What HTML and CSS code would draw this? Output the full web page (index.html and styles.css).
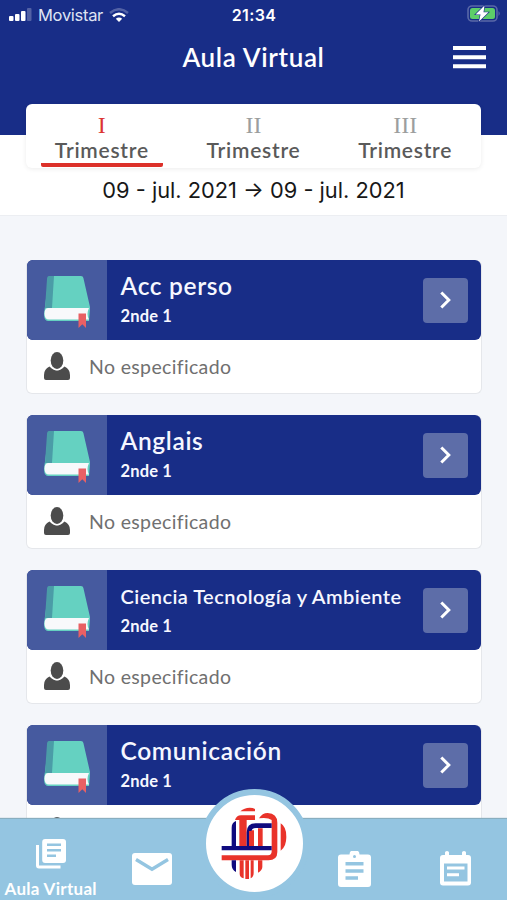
FILE: index.html
```html
<!DOCTYPE html>
<html lang="es">
<head>
<meta charset="utf-8">
<title>Aula Virtual</title>
<link rel="stylesheet" href="styles.css">
</head>
<body>
<svg class="defs" aria-hidden="true">
  <symbol id="book" viewBox="0 0 46 52">
    <path fill="#65d1c1" d="M5 0h32q2 0 2.400 2L46 31v2l-1 12H4Q0 45 0 38Z"/>
    <path fill="#4b9ca7" d="M5 0h5L8 32H1L3 3Q3.200 0 5 0Z"/>
    <path fill="#f8f9fb" d="M5 32h40q-3 6 0 11.500H5q-4.500 0-4.500-6T5 32Z"/>
    <path fill="#e86064" d="M34.500 37.500H42V52l-3.700-3.700-3.800 3.700Z"/>
  </symbol>
  <symbol id="person" viewBox="0 0 26 28">
    <path d="M5.500 14.500q7.500 8 15 0Q26 17 26 23v3q0 2-2 2H2q-2 0-2-2v-3q0-6 5.500-8.500Z"/>
    <ellipse cx="13" cy="8.700" rx="7.200" ry="9.500" fill="#fff"/>
    <ellipse cx="13" cy="8.500" rx="6.300" ry="8.500"/>
  </symbol>
  <symbol id="chevron" viewBox="0 0 14 20">
    <path d="m2.300 2.500 7.500 7.500-7.500 7.500" fill="none" stroke="#fff" stroke-width="3"/>
  </symbol>
</svg>
<div class="app">
  <header class="top">
    <div class="status">
      <div class="carrier">
        <svg width="23" height="14" viewBox="0 0 23 14" fill="#fff"><rect x="0" y="8" width="4.500" height="5" rx="1"/><rect x="6" y="6" width="4.500" height="7" rx="1"/><rect x="12" y="3" width="4.500" height="10" rx="1"/><rect x="18" y="0" width="4.500" height="13" rx="1" opacity=".25"/></svg>
        <span class="operator">Movistar</span>
        <svg width="20" height="15" viewBox="0 0 20 15" fill="none" stroke="#fff" stroke-width="2.500"><path d="M1 5q9-7.500 18 0" opacity=".25"/><path d="M4 8.200q6-5 12 0"/><path d="M6.800 10.800q3.200-2.400 6.400 0L10 14Z" fill="#fff" stroke="none"/></svg>
      </div>
      <time class="clock">21:34</time>
      <svg class="battery" width="34" height="17" viewBox="0 0 34 17"><rect x="1" y="1" width="29" height="15" rx="4" fill="none" stroke="#5968a8" stroke-width="1.600"/><path d="M31.500 6q2.500 2.500 0 5Z" fill="#5968a8"/><rect x="3" y="3" width="25" height="11" rx="2.500" fill="#5dce69"/><path d="m17.500.5-9 9h5L12 16.500l9.500-9.200h-5Z" fill="#fff" stroke="#182d87" stroke-width="1.200" paint-order="stroke"/></svg>
    </div>
    <div class="titlebar">
      <h1>Aula Virtual</h1>
      <svg class="menu" width="33" height="23" viewBox="0 0 33 23" fill="#fff"><path d="M0 0h33v4H0ZM0 9.200h33v4H0ZM0 18.200h33v4H0Z"/></svg>
    </div>
  </header>
  <section class="period">
    <nav class="tabs">
      <div class="tab active"><span class="numeral">I</span><span class="label">Trimestre</span></div>
      <div class="tab"><span class="numeral">II</span><span class="label">Trimestre</span></div>
      <div class="tab"><span class="numeral">III</span><span class="label">Trimestre</span></div>
    </nav>
    <p class="dates">09 - jul. 2021 → 09 - jul. 2021</p>
  </section>
  <main class="courses">
    <article class="card">
      <div class="course"><div class="thumb"><svg><use href="#book"/></svg></div><div class="info"><h2>Acc perso</h2><p>2nde 1</p></div><div class="go"><svg><use href="#chevron"/></svg></div></div>
      <div class="teacher"><svg><use href="#person"/></svg><span>No especificado</span></div>
    </article>
    <article class="card">
      <div class="course"><div class="thumb"><svg><use href="#book"/></svg></div><div class="info"><h2>Anglais</h2><p>2nde 1</p></div><div class="go"><svg><use href="#chevron"/></svg></div></div>
      <div class="teacher"><svg><use href="#person"/></svg><span>No especificado</span></div>
    </article>
    <article class="card">
      <div class="course"><div class="thumb"><svg><use href="#book"/></svg></div><div class="info"><h2 class="long">Ciencia Tecnología y Ambiente</h2><p>2nde 1</p></div><div class="go"><svg><use href="#chevron"/></svg></div></div>
      <div class="teacher"><svg><use href="#person"/></svg><span>No especificado</span></div>
    </article>
    <article class="card">
      <div class="course"><div class="thumb"><svg><use href="#book"/></svg></div><div class="info"><h2>Comunicación</h2><p>2nde 1</p></div><div class="go"><svg><use href="#chevron"/></svg></div></div>
      <div class="teacher"><svg><use href="#person"/></svg></div>
    </article>
  </main>
  <footer class="bottom">
    <div class="item current">
      <svg width="30" height="30" viewBox="0 0 30 30"><path d="M0 6h3v20.500h21.500v3H3q-3 0-3-3Z" fill="#fff"/><rect x="6.200" y="0" width="23.800" height="24" rx="3" fill="#fff"/><path d="M11 5.800h14M11 11.200h14M11 16.800h9" stroke="#94c5e1" stroke-width="2.600"/></svg>
      <span>Aula Virtual</span>
    </div>
    <div class="item"><svg width="40" height="32" viewBox="0 0 40 32"><rect width="40" height="32" rx="3" fill="#fff"/><path d="m4 6.500 16 9.700 16-9.700" fill="none" stroke="#94c5e1" stroke-width="3.400"/></svg></div>
    <div class="item"></div>
    <div class="item"><svg width="33" height="36" viewBox="0 0 33 36"><path d="M3 3.500h8.500a5 5 0 0 1 10 0H30q3 0 3 3V33q0 3-3 3H3q-3 0-3-3V6.500q0-3 3-3Z" fill="#fff"/><circle cx="16.500" cy="5.500" r="1.500" fill="#94c5e1"/><path d="M7.500 12.700h18M7.500 20h18M7.500 27h12.500" stroke="#94c5e1" stroke-width="3.400"/></svg></div>
    <div class="item"><svg width="32" height="35" viewBox="0 0 32 35"><path d="M3 4h2V1.500Q5 0 7 0t2 1.500V4h13V1.500Q22 0 24 0t2 1.500V4h2q3 0 3 3v24.500q0 3-3 3H3q-3 0-3-3V7q0-3 3-3Z" fill="#fff"/><path fill="#94c5e1" d="M4 12.500h23.500v18H4Z"/><path d="M7 17h17.500M7 23.800h12" stroke="#fff" stroke-width="3"/></svg></div>
    <div class="brand">
      <svg width="66" height="73" viewBox="18 20 198 219">
        <g fill="#e9332a">
          <path d="M76 33q12-11 28-11 10 0 16 4v7Z"/>
          <path d="M60 59q4-14 18-14h42v14Z"/>
          <path d="M73 59h22v78H73ZM102 90h15v47h-15ZM129 84h14v53h-14Z"/>
          <path d="M74 180h12v54q-12-3-12-14ZM91 180h11v56H91ZM107 180h9v38q0 12-9 16ZM129 180h13v20q0 10-13 17Z"/>
          <path d="M132 54q10-16 26-16 29 2 29 29v88q0 25-27 25H20v-15h139q11 0 11-12V59q-12-9-38-5Z"/>
          <path d="M197 69q17 10 17 40t-17 42Z"/>
        </g>
        <path fill="#100b7f" d="M50 137V82q0-15 13-20v75ZM95 137V96q0-27 27-27h48v14h-47q-14 0-14 13v41ZM20 137h150v13H20ZM50 180h13v35q-13-7-13-22Z"/>
        <path fill="#e9332a" d="M102 92h14v45h-14Z"/>
      </svg>
    </div>
  </footer>
</div>
</body>
</html>
```
FILE: styles.css
```css
* { box-sizing: border-box; margin: 0; padding: 0; }
body { background: #f4f6fa; font-family: Lato, sans-serif; }
svg { display: block; flex: none; }
.defs { position: absolute; width: 0; height: 0; }
.app { width: 507px; height: 900px; display: flex; flex-direction: column; overflow: hidden; }

.top { height: 135px; flex: none; background: #182d87; color: #fff; }
.status { height: 30px; display: grid; grid-template-columns: 1fr auto 1fr; align-items: center; padding: 0 6px 0 9px; font-family: Inter, sans-serif; font-size: 16.5px; }
.carrier { display: flex; align-items: center; gap: 6px; }
.operator { letter-spacing: -0.3px; color: #dfe3f3; }
.clock { font-weight: 600; font-size: 16px; letter-spacing: 0.4px; margin-left: -2px; }
.battery { justify-self: end; margin-top: -3px; }
.titlebar { height: 54px; display: grid; grid-template-columns: 1fr auto 1fr; align-items: center; padding-right: 21px; }
.titlebar h1 { grid-column: 2; font-size: 26px; line-height: 32px; font-weight: 600; letter-spacing: 0.65px; margin-left: 21px; }
.menu { justify-self: end; }

.period { height: 81px; flex: none; background: #fff; border-bottom: 1px solid #eceef2; }
.tabs { position: relative; height: 64px; margin: -31px 26px 0 26px; background: #fff; border-radius: 6px; display: grid; grid-template-columns: repeat(3, 1fr); box-shadow: 0 1px 5px rgba(0, 0, 0, 0.08); }
.tab { display: flex; flex-direction: column; align-items: center; margin: 0 15px; height: 63px; padding-top: 9px; color: #9c9e9e; }
.numeral { font: 24px/25px "Liberation Serif", serif; }
.label { font-size: 21px; line-height: 24px; font-weight: 600; color: #5a5a5a; letter-spacing: 0.75px; }
.active { color: #dc3432; border-bottom: 4px solid #dc3029; border-radius: 2px; }
.dates { font: 21.8px/28px Inter, sans-serif; text-align: center; color: #171717; margin-top: 8px; white-space: nowrap; }

.courses { flex: 1; min-height: 0; overflow: hidden; padding: 44px 25px 0 26px; display: flex; flex-direction: column; gap: 21px; }
.card { flex: none; height: 134px; background: #fff; border: 1px solid #e5e7eb; border-top: 0; border-radius: 6px; }
.course { height: 80px; background: #182d87; border-radius: 6px; display: flex; align-items: center; overflow: hidden; color: #f6f7ff; }
.thumb { width: 80px; height: 80px; background: #465a9f; padding: 16px 17px; }
.thumb svg { width: 46px; height: 52px; }
.info { flex: 1; padding-left: 13.5px; margin-top: -3px; white-space: nowrap; }
.info h2 { font-size: 24.5px; line-height: 32px; font-weight: 600; letter-spacing: 0.65px; }
.info .long { font-size: 20px; letter-spacing: 0.45px; }
.info p { font-size: 16.5px; line-height: 24px; font-weight: 700; letter-spacing: 0.15px; margin-top: 2px; }
.go { width: 45px; height: 45px; margin-right: 13px; border-radius: 4px; background: #5d6da8; display: flex; align-items: center; justify-content: center; }
.go svg { width: 14px; height: 20px; }
.teacher { height: 53px; display: flex; align-items: center; padding-left: 17px; gap: 19px; color: #707070; font-size: 19.5px; letter-spacing: 0.35px; }
.teacher svg { width: 26px; height: 28px; margin-top: -2px; fill: #4c4c4c; }

.bottom { position: relative; height: 81px; flex: none; background: #94c5e1; display: grid; grid-template-columns: repeat(5, 1fr); box-shadow: 0 -1px 1px #89aebf; }
.item { display: flex; flex-direction: column; align-items: center; justify-content: center; padding-top: 18px; color: #fff; }
.current { justify-content: flex-start; padding-top: 20px; }
.current span { font-size: 17px; line-height: 20px; font-weight: 700; letter-spacing: 0.3px; margin-top: 10px; white-space: nowrap; }
.brand { position: absolute; left: 199.5px; top: -30px; width: 109px; height: 109px; border: 6px solid #94c5e1; border-radius: 50%; background: #fff; display: flex; align-items: center; justify-content: center; }
```
